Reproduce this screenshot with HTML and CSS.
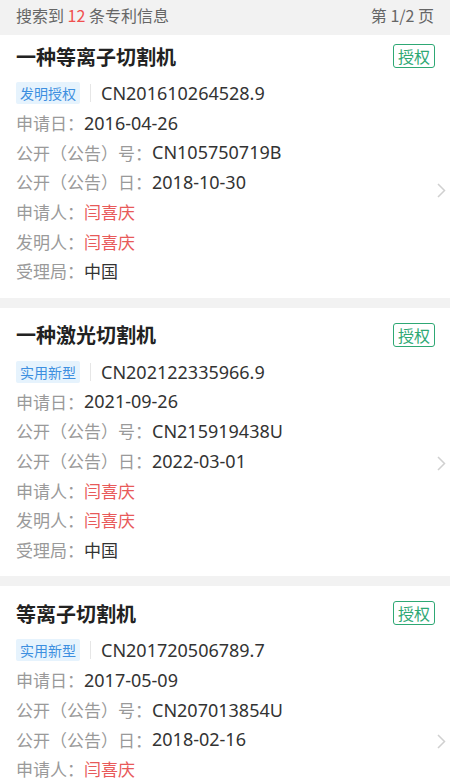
FILE: index.html
```html
<!DOCTYPE html>
<html lang="zh-CN">
  <head>
    <meta charset="UTF-8" />
    <meta name="viewport" content="width=device-width, initial-scale=1.0" />
    <title>专利列表</title>
    <link rel="stylesheet" href="styles.css">
  </head>
  <body>
    <div class="summary">
      <span>搜索到 <em>12</em> 条专利信息</span>
      <span>第 1/2 页</span>
    </div>

    <div class="patents">
      <div class="patent">
        <div class="patent-head">
          <h2>一种等离子切割机</h2>
          <span class="status">授权</span>
        </div>
        <div class="patent-no">
          <span class="kind">发明授权</span>
          <span class="divider"></span>
          <span>CN201610264528.9</span>
        </div>
        <div class="row"><span class="label">申请日：</span>2016-04-26</div>
        <div class="row"><span class="label">公开（公告）号：</span>CN105750719B</div>
        <div class="row"><span class="label">公开（公告）日：</span>2018-10-30</div>
        <div class="row"><span class="label">申请人：</span><span class="person">闫喜庆</span></div>
        <div class="row"><span class="label">发明人：</span><span class="person">闫喜庆</span></div>
        <div class="row"><span class="label">受理局：</span><span class="office">中国</span></div>
        <svg class="arrow" width="9" height="15" viewBox="0 0 9 15"><path d="M1 1l6.5 6.5L1 14" fill="none" stroke="#d0d0d0" stroke-width="1.5"/></svg>
      </div>

      <div class="patent">
        <div class="patent-head">
          <h2>一种激光切割机</h2>
          <span class="status">授权</span>
        </div>
        <div class="patent-no">
          <span class="kind">实用新型</span>
          <span class="divider"></span>
          <span>CN202122335966.9</span>
        </div>
        <div class="row"><span class="label">申请日：</span>2021-09-26</div>
        <div class="row"><span class="label">公开（公告）号：</span>CN215919438U</div>
        <div class="row"><span class="label">公开（公告）日：</span>2022-03-01</div>
        <div class="row"><span class="label">申请人：</span><span class="person">闫喜庆</span></div>
        <div class="row"><span class="label">发明人：</span><span class="person">闫喜庆</span></div>
        <div class="row"><span class="label">受理局：</span><span class="office">中国</span></div>
        <svg class="arrow" width="9" height="15" viewBox="0 0 9 15"><path d="M1 1l6.5 6.5L1 14" fill="none" stroke="#d0d0d0" stroke-width="1.5"/></svg>
      </div>

      <div class="patent">
        <div class="patent-head">
          <h2>等离子切割机</h2>
          <span class="status">授权</span>
        </div>
        <div class="patent-no">
          <span class="kind">实用新型</span>
          <span class="divider"></span>
          <span>CN201720506789.7</span>
        </div>
        <div class="row"><span class="label">申请日：</span>2017-05-09</div>
        <div class="row"><span class="label">公开（公告）号：</span>CN207013854U</div>
        <div class="row"><span class="label">公开（公告）日：</span>2018-02-16</div>
        <div class="row"><span class="label">申请人：</span><span class="person">闫喜庆</span></div>
        <div class="row"><span class="label">发明人：</span><span class="person">闫喜庆</span></div>
        <div class="row"><span class="label">受理局：</span><span class="office">中国</span></div>
        <svg class="arrow" width="9" height="15" viewBox="0 0 9 15"><path d="M1 1l6.5 6.5L1 14" fill="none" stroke="#d0d0d0" stroke-width="1.5"/></svg>
      </div>
    </div>
  </body>
</html>
```

FILE: styles.css
```css
body,
html {
  margin: 0;
  padding: 0;
  height: 100%;
}

body {
  background: #f2f2f2;
  font-family: "Noto Sans", "Noto Sans CJK SC", sans-serif;
  color: #333333;
  overflow: hidden;
}

.summary {
  display: flex;
  justify-content: space-between;
  height: 35px;
  line-height: 30px;
  padding: 0 16px;
  font-size: 16px;
  color: #666666;
  font-family: "Noto Sans CJK SC", sans-serif;
}

.summary em {
  font-style: normal;
  color: #f0504f;
}

.patent {
  position: relative;
  background: #ffffff;
  padding: 12px 15px 12px 16px;
  margin-bottom: 10px;
}

.patent:first-child {
  padding-top: 6px;
}

.patent-head {
  display: flex;
  justify-content: space-between;
  align-items: center;
  height: 30px;
  margin-bottom: 7px;
}

.patent-head h2 {
  margin: 0;
  font-size: 20px;
  font-weight: 700;
  color: #222222;
  font-family: "Noto Sans CJK SC", sans-serif;
}

.status {
  height: 22px;
  line-height: 22px;
  padding: 0 4px;
  border: 1.5px solid #2ea874;
  border-radius: 3px;
  color: #2ea874;
  font-size: 16px;
  font-family: "Noto Sans CJK SC", sans-serif;
}

.patent-no {
  display: flex;
  align-items: center;
  height: 30px;
  font-size: 18px;
}

.kind {
  height: 22px;
  line-height: 22px;
  padding: 0 4px;
  background: #e6f3fd;
  color: #3d8fe0;
  font-size: 14px;
  border-radius: 2px;
  font-family: "Noto Sans CJK SC", sans-serif;
}

.divider {
  width: 1px;
  height: 18px;
  background: #e6e6e6;
  margin: 0 10px;
}

.row {
  display: flex;
  align-items: center;
  height: 29.6px;
  font-size: 18px;
}

.label {
  color: #9a9a9a;
  font-size: 17px;
  font-family: "Noto Sans CJK SC", sans-serif;
}

.person,
.office {
  font-size: 17px;
  font-family: "Noto Sans CJK SC", sans-serif;
}

.person {
  color: #e85a5a;
}

.arrow {
  position: absolute;
  right: 4px;
  top: 148px;
}
```
